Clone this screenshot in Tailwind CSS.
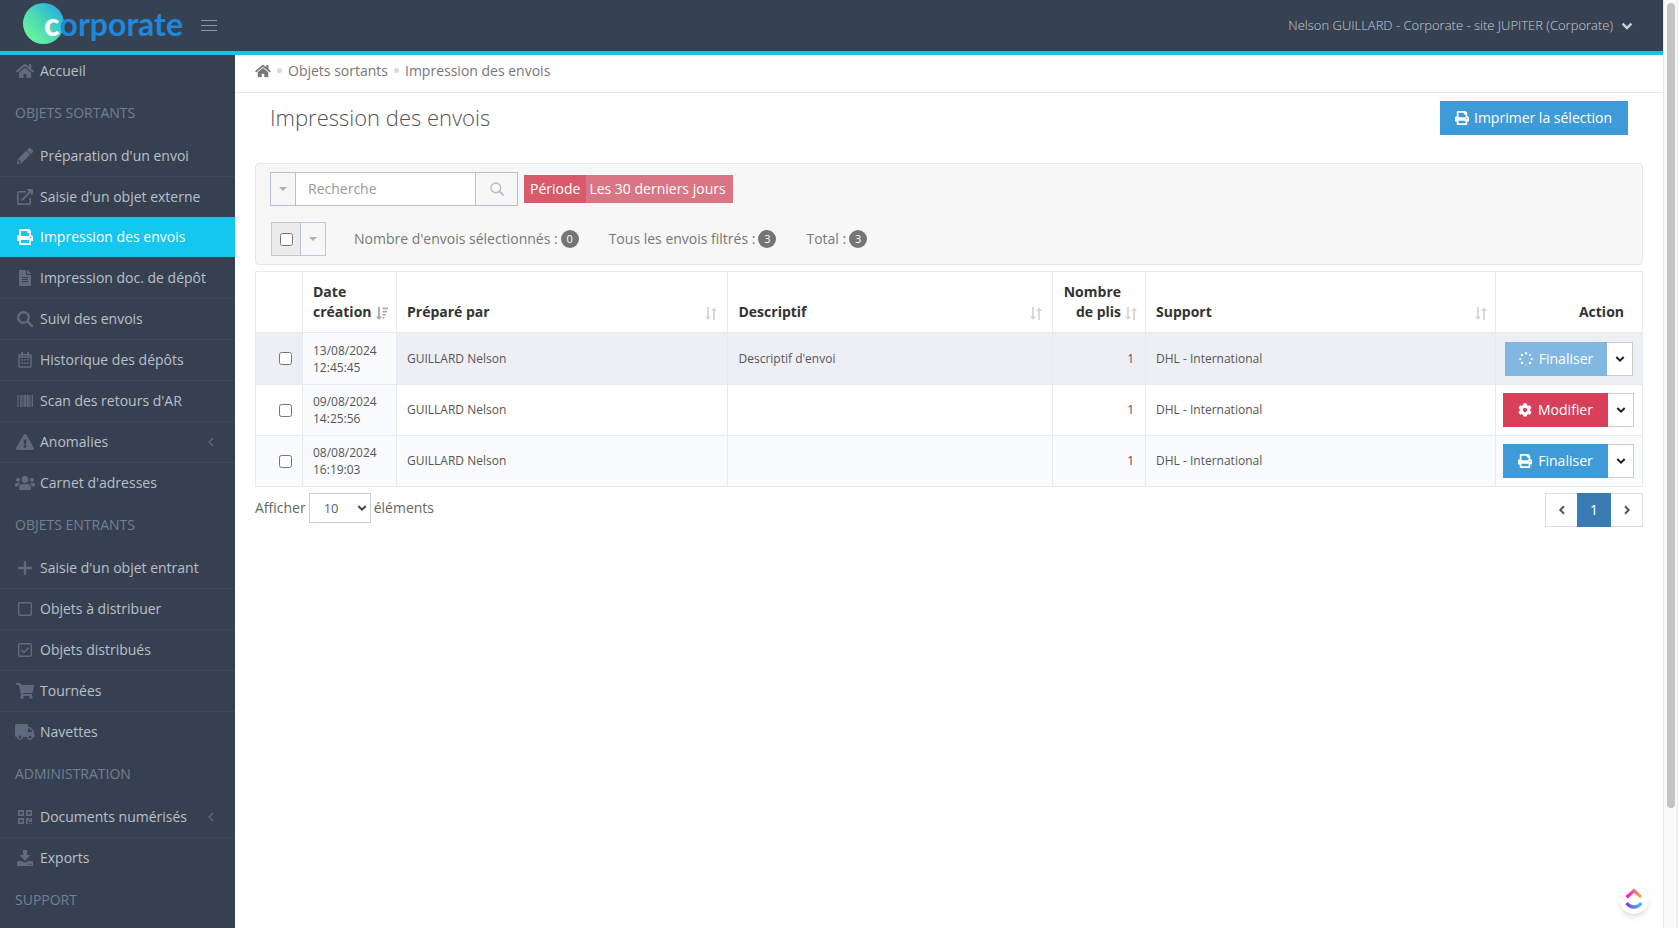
<!DOCTYPE html>
<html lang="fr">
<head>
<meta charset="utf-8">
<title>Impression des envois</title>
<script src="https://cdn.jsdelivr.net/npm/@tailwindcss/browser@4"></script>
</head>
<body class="flex h-screen overflow-hidden bg-white font-['Open_Sans','Noto_Sans',sans-serif] text-sm text-[#666]">

<svg class="hidden" aria-hidden="true">
  <symbol id="home" viewBox="0 0 576 512"><path d="M280.37 148.26L96 300.11V464a16 16 0 0 0 16 16l112.06-.29a16 16 0 0 0 15.92-16V368a16 16 0 0 1 16-16h64a16 16 0 0 1 16 16v95.64a16 16 0 0 0 16 16.05L464 480a16 16 0 0 0 16-16V300L295.67 148.26a12.19 12.19 0 0 0-15.3 0zM571.6 251.47L488 182.56V44.05a12 12 0 0 0-12-12h-56a12 12 0 0 0-12 12v72.61L318.47 43a48 48 0 0 0-61 0L4.34 251.47a12 12 0 0 0-1.6 16.9l25.5 31A12 12 0 0 0 45.15 301l235.22-193.74a12.19 12.19 0 0 1 15.3 0L530.9 301a12 12 0 0 0 16.9-1.6l25.5-31a12 12 0 0 0-1.7-16.93z"/></symbol>
  <symbol id="pencil" viewBox="0 0 512 512"><path d="M497.9 142.1l-46.1 46.1c-4.7 4.7-12.3 4.7-17 0l-111-111c-4.7-4.7-4.7-12.3 0-17l46.1-46.1c18.7-18.7 49.1-18.7 67.9 0l60.1 60.1c18.8 18.7 18.8 49.1 0 67.9zM284.2 99.8L21.6 362.4.4 483.9c-2.9 16.4 11.4 30.6 27.8 27.8l121.5-21.3 262.6-262.6c4.7-4.7 4.7-12.3 0-17l-111-111c-4.8-4.7-12.4-4.7-17.1 0zM88 424h48v36.3l-64.5 11.3-31.1-31.1L51.7 376H88v48z"/></symbol>
  <symbol id="external" viewBox="0 0 512 512"><path d="M288 88H56a28 28 0 0 0-28 28v340a28 28 0 0 0 28 28h340a28 28 0 0 0 28-28V288" fill="none" stroke="currentColor" stroke-width="52"/><path d="M165 347L440 72" fill="none" stroke="currentColor" stroke-width="60" stroke-linecap="round"/><path d="M488 0H352c-21 0-32 26-17 41l136 136c15 15 41 4 41-17V24c0-13-11-24-24-24z"/></symbol>
  <symbol id="print" viewBox="0 0 512 512"><path d="M448 192V77.25c0-8.49-3.37-16.62-9.37-22.63L393.37 9.37c-6-6-14.14-9.37-22.63-9.37H96C78.33 0 64 14.33 64 32v160c-35.35 0-64 28.65-64 64v112c0 8.84 7.16 16 16 16h48v96c0 17.67 14.33 32 32 32h320c17.67 0 32-14.33 32-32v-96h48c8.84 0 16-7.16 16-16V256c0-35.35-28.65-64-64-64zm-64 256H128v-96h256v96zm0-224H128V64h192v48c0 8.84 7.16 16 16 16h48v96zm48 72c-13.25 0-24-10.75-24-24 0-13.26 10.75-24 24-24s24 10.74 24 24c0 13.25-10.75 24-24 24z"/></symbol>
  <symbol id="file" viewBox="0 0 384 512"><path d="M224 136V0H24C10.7 0 0 10.7 0 24v464c0 13.3 10.7 24 24 24h336c13.3 0 24-10.7 24-24V160H248c-13.2 0-24-10.8-24-24zm64 236c0 6.6-5.4 12-12 12H108c-6.6 0-12-5.4-12-12v-8c0-6.6 5.4-12 12-12h168c6.6 0 12 5.4 12 12v8zm0-64c0 6.6-5.4 12-12 12H108c-6.6 0-12-5.4-12-12v-8c0-6.6 5.4-12 12-12h168c6.6 0 12 5.4 12 12v8zm0-72v8c0 6.6-5.4 12-12 12H108c-6.6 0-12-5.4-12-12v-8c0-6.6 5.4-12 12-12h168c6.6 0 12 5.4 12 12zm96-114.1v6.1H256V0h6.1c6.4 0 12.5 2.5 17 7l97.9 98c4.5 4.5 7 10.6 7 16.9z"/></symbol>
  <symbol id="search" viewBox="0 0 16 16"><circle cx="6.5" cy="6.5" r="5.3" fill="none" stroke="currentColor" stroke-width="2.4"/><path d="M10.8 10.8L14.8 14.8" stroke="currentColor" stroke-width="2.6" stroke-linecap="round"/></symbol>
  <symbol id="search-thin" viewBox="0 0 16 16"><circle cx="6.7" cy="6.7" r="5.6" fill="none" stroke="currentColor" stroke-width="1.6"/><path d="M10.8 10.8L15 15" stroke="currentColor" stroke-width="2" stroke-linecap="round"/></symbol>
  <symbol id="calendar" viewBox="0 0 14 16"><path d="M1 4.5V14.2a.8.8 0 0 0 .8.8H12.2a.8.8 0 0 0 .8-.8V3.5a.8.8 0 0 0-.8-.8H1.8a.8.8 0 0 0-.8.8zM1 5H13" fill="none" stroke="currentColor" stroke-width="1.5"/><path d="M3 0h2v3.5H3zM9 0h2v3.5H9zM3.5 7h1.6v1.6H3.5zM6.2 7h1.6v1.6H6.2zM9 7h1.6v1.6H9zM3.5 10.3h1.6v1.6H3.5zM6.2 10.3h1.6v1.6H6.2zM9 10.3h1.6v1.6H9z"/></symbol>
  <symbol id="barcode" viewBox="0 0 16 12"><path d="M0 0h.6v12H0zM1.2 0h.6v12h-.6zM3.2 0h1.5v12H3.2zM5.5 0h1v12h-1zM7.2 0h2.2v12H7.2zM10 0h1.8v12H10zM12.4 0h.7v12h-.7zM13.6 0h.7v12h-.7zM15 0h1v12h-1z"/></symbol>
  <symbol id="warning" viewBox="0 0 576 512"><path d="M569.517 440.013C587.975 472.007 564.806 512 527.94 512H48.054c-36.937 0-59.999-40.055-41.577-71.987L246.423 23.985c18.467-32.009 64.72-31.951 83.154 0l239.94 416.028zM288 354c-25.405 0-46 20.595-46 46s20.595 46 46 46 46-20.595 46-46-20.595-46-46-46zm-43.673-165.346l7.418 136c.347 6.364 5.609 11.346 11.982 11.346h48.546c6.373 0 11.635-4.982 11.982-11.346l7.418-136c.375-6.874-5.098-12.654-11.982-12.654h-63.383c-6.884 0-12.356 5.78-11.981 12.654z"/></symbol>
  <symbol id="users" viewBox="0 0 640 512"><path d="M320 32c-62 0-112 50-112 112s50 112 112 112 112-50 112-112S382 32 320 32zM176 480h288c26 0 48-21 48-48v-29c0-64-52-115-115-115-49 21-105 21-154 0-63 0-115 51-115 115v29c0 27 22 48 48 48z"/><circle cx="96" cy="150" r="64"/><circle cx="544" cy="150" r="64"/><path d="M0 352v-38c0-35 29-64 64-64h56c20 0 32 6 44 18-32 22-56 56-66 96H16c-9 0-16-5-16-12zM640 352v-38c0-35-29-64-64-64h-56c-20 0-32 6-44 18 32 22 56 56 66 96h82c9 0 16-5 16-12z"/></symbol>
  <symbol id="plus" viewBox="0 0 14 14"><path d="M7 1.2V12.800M1.200 7H12.800" stroke="currentColor" stroke-width="2.400" stroke-linecap="round"/></symbol>
  <symbol id="square" viewBox="0 0 14 14"><rect x=".7" y=".7" width="12.6" height="12.6" rx="1" fill="none" stroke="currentColor" stroke-width="1.4"/></symbol>
  <symbol id="square-check" viewBox="0 0 14 14"><rect x=".7" y=".7" width="12.6" height="12.6" rx="1" fill="none" stroke="currentColor" stroke-width="1.4"/><path d="M3.5 7.2L6 9.5L10.7 4.7" fill="none" stroke="currentColor" stroke-width="1.6"/></symbol>
  <symbol id="cart" viewBox="0 0 576 512"><path d="M528.12 301.319l47.273-208C578.806 78.301 567.391 64 551.99 64H159.208l-9.166-44.81C147.758 8.021 137.93 0 126.529 0H24C10.745 0 0 10.745 0 24v16c0 13.255 10.745 24 24 24h69.883l70.248 343.435C147.325 417.1 136 435.222 136 456c0 30.928 25.072 56 56 56s56-25.072 56-56c0-15.674-6.447-29.835-16.824-40h209.647C430.447 426.165 424 440.326 424 456c0 30.928 25.072 56 56 56s56-25.072 56-56c0-22.172-12.888-41.332-31.579-50.405l5.517-24.276c3.413-15.018-8.002-29.319-23.403-29.319H218.117l-6.545-32h293.145c11.206 0 20.92-7.754 23.403-18.681z"/></symbol>
  <symbol id="truck" viewBox="0 0 640 512"><path d="M624 352h-16V243.9c0-12.7-5.1-24.9-14.1-33.9L494 110.1c-9-9-21.2-14.1-33.9-14.1H416V48c0-26.5-21.5-48-48-48H48C21.5 0 0 21.5 0 48v320c0 26.5 21.5 48 48 48h16c0 53 43 96 96 96s96-43 96-96h128c0 53 43 96 96 96s96-43 96-96h48c8.8 0 16-7.2 16-16v-32c0-8.8-7.2-16-16-16zM160 464c-26.5 0-48-21.5-48-48s21.5-48 48-48 48 21.5 48 48-21.5 48-48 48zm320 0c-26.5 0-48-21.5-48-48s21.5-48 48-48 48 21.5 48 48-21.5 48-48 48zm80-208H416V144h44.1l99.9 99.9V256z"/></symbol>
  <symbol id="qrcode" viewBox="0 0 14 14"><path fill-rule="evenodd" d="M0 0h6v6H0zM1.7 1.7v2.6h2.6V1.7zM8 0h6v6H8zM9.7 1.7v2.6h2.6V1.7zM0 8h6v6H0zM1.7 9.7v2.6h2.6V9.7zM8 8h3v1.5h1.2V8H14v4h-3v-1.5H9.7V14H8zM11 13h1v1h-1zM13 13h1v1h-1z"/></symbol>
  <symbol id="download" viewBox="0 0 512 512"><path d="M216 0h80c13.3 0 24 10.7 24 24v136h70c17.8 0 26.700 21.500 14.100 34.100L269.700 330c-7.500 7.500-19.800 7.500-27.300 0L108 194.100C95 181.500 104 160 122 160H192V24c0-13.300 10.700-24 24-24z"/><path fill-rule="evenodd" d="M24 352h130l54 36c28 18 68 18 96 0l54-36h130c13.300 0 24 10.700 24 24v112c0 13.300-10.700 24-24 24H24c-13.300 0-24-10.700-24-24V376c0-13.300 10.700-24 24-24zM352 440v40h36v-40zM424 440v40h36v-40z"/></symbol>
  <symbol id="cog" viewBox="0 0 512 512"><path d="M487.4 315.7l-42.6-24.6c4.3-23.2 4.3-47 0-70.2l42.6-24.6c4.9-2.8 7.1-8.6 5.5-14-11.1-35.6-30-67.8-54.7-94.6-3.8-4.1-10-5.1-14.8-2.3L380.8 110c-17.9-15.4-38.5-27.3-60.8-35.1V25.8c0-5.6-3.9-10.5-9.4-11.7-36.7-8.2-74.3-7.8-109.2 0-5.5 1.2-9.4 6.1-9.4 11.7V75c-22.2 7.9-42.8 19.8-60.8 35.1L88.7 85.5c-4.9-2.8-11-1.9-14.8 2.3-24.7 26.7-43.6 58.9-54.7 94.6-1.7 5.4.6 11.2 5.5 14L67.3 221c-4.3 23.2-4.3 47 0 70.2l-42.6 24.6c-4.9 2.8-7.1 8.6-5.5 14 11.1 35.6 30 67.8 54.7 94.6 3.8 4.1 10 5.1 14.8 2.3l42.6-24.6c17.9 15.4 38.5 27.3 60.8 35.1v49.2c0 5.6 3.9 10.5 9.4 11.7 36.7 8.2 74.3 7.8 109.2 0 5.5-1.2 9.4-6.1 9.4-11.7v-49.2c22.2-7.9 42.8-19.8 60.8-35.1l42.6 24.6c4.9 2.8 11 1.9 14.8-2.3 24.7-26.7 43.6-58.9 54.7-94.6 1.5-5.5-.7-11.3-5.6-14.1zM256 336c-44.1 0-80-35.9-80-80s35.9-80 80-80 80 35.9 80 80-35.9 80-80 80z"/></symbol>
  <symbol id="spinner" viewBox="0 0 14 14"><circle cx="7" cy="1.3" r="1.2"/><circle cx="11" cy="3" r=".9"/><circle cx="12.7" cy="7" r="1.1"/><circle cx="11" cy="11" r="1.2"/><circle cx="3" cy="11" r="1.2"/><circle cx="1.3" cy="7" r="1.1"/><circle cx="3" cy="3" r="1.2"/><circle cx="7" cy="12.8" r=".6"/></symbol>
  <symbol id="chev-down" viewBox="0 0 10 10"><path d="M1.3 3L5 6.7L8.7 3" fill="none" stroke="currentColor" stroke-width="2"/></symbol>
  <symbol id="chev-left" viewBox="0 0 10 10"><path d="M7 1.3L3.3 5L7 8.7" fill="none" stroke="currentColor" stroke-width="2"/></symbol>
  <symbol id="chev-right" viewBox="0 0 10 10"><path d="M3 1.3L6.7 5L3 8.7" fill="none" stroke="currentColor" stroke-width="2"/></symbol>
  <symbol id="angle-left" viewBox="0 0 6 10"><path d="M5 1L1 5L5 9" fill="none" stroke="currentColor" stroke-width="1.3"/></symbol>
  <symbol id="caret" viewBox="0 0 8 4"><path d="M0 0H8L4 4z"/></symbol>
  <symbol id="sort" viewBox="0 0 12 14"><path d="M3 0V11M9 3V13" stroke="currentColor" stroke-width="1.8"/><path d="M0 9.5H6L3 13zM6 4H12L9 .5z"/></symbol>
  <symbol id="sort-desc" viewBox="0 0 12 14"><path d="M3 0V11" stroke="currentColor" stroke-width="1.8"/><path d="M0 9.5H6L3 13zM6.5 .5H12V2.2H6.5zM6.5 3.7H11V5.4H6.5zM6.5 6.9H10V8.6H6.5zM6.5 10.1H8.5V11.8H6.5z"/></symbol>
</svg>

<div class="flex min-w-0 flex-1 flex-col">
  <header class="flex h-[55px] shrink-0 items-center justify-between border-b-4 border-[#1bc3e3] bg-[#364252] pr-[30px] pl-[23px]">
    <div class="flex items-center gap-[18px]">
      <a href="#" class="relative flex h-[45px] items-center pb-1" aria-label="corporate">
        <span class="absolute top-0 left-0 size-[41px] rounded-full bg-linear-to-tr from-[#74ff8c] via-[#4cd8b4] to-[#1e9fe8]"></span>
        <span class="relative pl-[21px] font-[Lato,sans-serif] text-[32px] leading-none font-bold text-[#1e88dc]"><span class="font-black text-white">c</span>orporate</span>
      </a>
      <button class="flex w-4 flex-col gap-1" aria-label="Menu"><span class="h-px bg-[#8d97a5]"></span><span class="h-px bg-[#8d97a5]"></span><span class="h-px bg-[#8d97a5]"></span></button>
    </div>
    <button class="flex items-center gap-2 text-[13px] font-light text-[#c6cfda]">Nelson GUILLARD - Corporate - site JUPITER (Corporate)<svg class="size-3 fill-current"><use href="#chev-down"/></svg></button>
  </header>

  <div class="flex min-h-0 flex-1">
    <nav class="w-[235px] shrink-0 overflow-hidden bg-[#374050] text-[#b8c0cc]">
      <a href="#" class="flex h-9 items-center gap-1 pr-5 pb-1 pl-[15px]"><svg class="h-4 w-5 fill-current text-[#606a7e]"><use href="#home"/></svg><span class="flex-1 pl-px">Accueil</span></a>
      <h3 class="flex h-11 items-center px-[15px] text-[#708096]">OBJETS SORTANTS</h3>
      <a href="#" class="flex h-[41px] items-center gap-1 pr-5 pl-[15px]"><svg class="h-4 w-5 fill-current text-[#606a7e]"><use href="#pencil"/></svg><span class="flex-1 pl-px">Préparation d'un envoi</span></a>
      <a href="#" class="flex h-[41px] items-center gap-1 border-t border-[#3f4959] pr-5 pl-[15px]"><svg class="h-4 w-5 fill-current text-[#606a7e]"><use href="#external"/></svg><span class="flex-1 pl-px">Saisie d'un objet externe</span></a>
      <a href="#" aria-current="page" class="flex h-10 items-center gap-1 bg-[#14c7ee] pr-5 pl-[15px] text-white"><svg class="h-4 w-5 fill-current"><use href="#print"/></svg><span class="flex-1 pl-px">Impression des envois</span></a>
      <a href="#" class="flex h-[41px] items-center gap-1 pr-5 pl-[15px]"><svg class="h-4 w-5 fill-current text-[#606a7e]"><use href="#file"/></svg><span class="flex-1 pl-px">Impression doc. de dépôt</span></a>
      <a href="#" class="flex h-[41px] items-center gap-1 border-t border-[#3f4959] pr-5 pl-[15px]"><svg class="h-4 w-5 fill-current text-[#606a7e]"><use href="#search"/></svg><span class="flex-1 pl-px">Suivi des envois</span></a>
      <a href="#" class="flex h-[41px] items-center gap-1 border-t border-[#3f4959] pr-5 pl-[15px]"><svg class="h-4 w-5 fill-current text-[#606a7e]"><use href="#calendar"/></svg><span class="flex-1 pl-px">Historique des dépôts</span></a>
      <a href="#" class="flex h-[41px] items-center gap-1 border-t border-[#3f4959] pr-5 pl-[15px]"><svg class="h-3 w-5 fill-current text-[#606a7e]"><use href="#barcode"/></svg><span class="flex-1 pl-px">Scan des retours d'AR</span></a>
      <a href="#" class="flex h-[41px] items-center gap-1 border-t border-[#3f4959] pr-5 pl-[15px]"><svg class="h-4 w-5 fill-current text-[#606a7e]"><use href="#warning"/></svg><span class="flex-1 pl-px">Anomalies</span><svg class="h-2.5 w-2 text-[#606a7e]"><use href="#angle-left"/></svg></a>
      <a href="#" class="flex h-[41px] items-center gap-1 border-t border-[#3f4959] pr-5 pl-[15px]"><svg class="h-4 w-5 fill-current text-[#606a7e]"><use href="#users"/></svg><span class="flex-1 pl-px">Carnet d'adresses</span></a>
      <h3 class="flex h-11 items-center px-[15px] text-[#708096]">OBJETS ENTRANTS</h3>
      <a href="#" class="flex h-[41px] items-center gap-1 pr-5 pl-[15px]"><svg class="h-3.5 w-5 fill-current text-[#606a7e]"><use href="#plus"/></svg><span class="flex-1 pl-px">Saisie d'un objet entrant</span></a>
      <a href="#" class="flex h-[41px] items-center gap-1 border-t border-[#3f4959] pr-5 pl-[15px]"><svg class="h-3.5 w-5 fill-current text-[#606a7e]"><use href="#square"/></svg><span class="flex-1 pl-px">Objets à distribuer</span></a>
      <a href="#" class="flex h-[41px] items-center gap-1 border-t border-[#3f4959] pr-5 pl-[15px]"><svg class="h-3.5 w-5 fill-current text-[#606a7e]"><use href="#square-check"/></svg><span class="flex-1 pl-px">Objets distribués</span></a>
      <a href="#" class="flex h-[41px] items-center gap-1 border-t border-[#3f4959] pr-5 pl-[15px]"><svg class="h-4 w-5 fill-current text-[#606a7e]"><use href="#cart"/></svg><span class="flex-1 pl-px">Tournées</span></a>
      <a href="#" class="flex h-[41px] items-center gap-1 border-t border-[#3f4959] pr-5 pl-[15px]"><svg class="h-4 w-5 fill-current text-[#606a7e]"><use href="#truck"/></svg><span class="flex-1 pl-px">Navettes</span></a>
      <h3 class="flex h-11 items-center px-[15px] text-[#708096]">ADMINISTRATION</h3>
      <a href="#" class="flex h-[41px] items-center gap-1 pr-5 pl-[15px]"><svg class="h-3.5 w-5 fill-current text-[#606a7e]"><use href="#qrcode"/></svg><span class="flex-1 pl-px">Documents numérisés</span><svg class="h-2.5 w-2 text-[#606a7e]"><use href="#angle-left"/></svg></a>
      <a href="#" class="flex h-[41px] items-center gap-1 border-t border-[#3f4959] pr-5 pl-[15px]"><svg class="h-4 w-5 fill-current text-[#606a7e]"><use href="#download"/></svg><span class="flex-1 pl-px">Exports</span></a>
      <h3 class="flex h-11 items-center px-[15px] text-[#708096]">SUPPORT</h3>
    </nav>

    <main class="min-w-0 flex-1">
      <div class="flex h-[38px] items-center gap-[6px] border-b border-[#e7eaf0] px-5 pb-[6px] text-[#777]">
        <a href="#" aria-label="Accueil"><svg class="h-3.5 w-4 fill-current"><use href="#home"/></svg></a>
        <span class="size-[5px] rounded-full bg-[#d9d9d9]"></span>
        <a href="#">Objets sortants</a>
        <span class="size-[5px] rounded-full bg-[#d9d9d9]"></span>
        <span>Impression des envois</span>
      </div>

      <div class="px-5 pt-2">
        <div class="flex items-start justify-between pr-[15px] pl-[15px]">
          <h1 class="text-[22px] leading-8 font-light text-[#555]">Impression des envois</h1>
          <button class="flex h-[34px] items-center gap-[5px] bg-[#3f9bd8] pr-4 pl-[15px] text-white"><svg class="size-3.5 fill-current"><use href="#print"/></svg>Imprimer la sélection</button>
        </div>

        <section class="mt-7 flex flex-col gap-4 rounded-sm border border-[#e6e6e6] bg-[#f7f7f7] px-[14px] pt-2 pb-2">
          <div class="flex items-center gap-[6px]">
            <div class="flex h-[34px] border border-[#b8c0d0]">
              <button class="flex w-[25px] items-center justify-center border-r border-[#b8c0d0] text-[#a6b1c3]" aria-label="Options de recherche"><svg class="h-1 w-2 fill-current"><use href="#caret"/></svg></button>
              <input type="text" placeholder="Recherche" aria-label="Recherche" class="w-[179px] bg-white px-3 placeholder:text-[#999]">
              <button class="flex w-[42px] items-center justify-center border-l border-[#b8c0d0] text-[#b3bfcf]" aria-label="Rechercher"><svg class="size-3.5"><use href="#search-thin"/></svg></button>
            </div>
            <button class="flex h-7 items-center bg-[#d97584] text-white"><span class="flex h-full items-center bg-[#d85a6b] px-[6px]">Période</span><span class="pr-[7px] pl-[3px]">Les 30 derniers jours</span></button>
          </div>
          <div class="flex items-center">
            <div class="ml-px flex h-[34px] border border-[#c3c8d2]">
              <label class="flex w-7 items-center justify-center bg-[#ececec]"><input type="checkbox" aria-label="Tout sélectionner" class="size-[13px]"></label>
              <button class="flex w-[25px] items-center justify-center border-l border-[#b8c0d0] text-[#a6b1c3]" aria-label="Options de sélection"><svg class="h-1 w-2 fill-current"><use href="#caret"/></svg></button>
            </div>
            <div class="ml-7 flex items-center gap-[30px] text-[#777]">
              <span class="flex items-center gap-[3px]">Nombre d'envois sélectionnés : <span class="flex size-[18px] items-center justify-center rounded-full bg-[#757575] text-[11px] text-white">0</span></span>
              <span class="flex items-center gap-[3px]">Tous les envois filtrés : <span class="flex size-[18px] items-center justify-center rounded-full bg-[#757575] text-[11px] text-white">3</span></span>
              <span class="flex items-center gap-[3px]">Total : <span class="flex size-[18px] items-center justify-center rounded-full bg-[#757575] text-[11px] text-white">3</span></span>
            </div>
          </div>
        </section>

        <table class="mt-[6px] w-full table-fixed border-collapse border border-[#e7eaf0] text-xs text-[#555]">
          <colgroup><col class="w-[47px]"><col class="w-[94px]"><col class="w-[23.9%]"><col class="w-[23.4%]"><col class="w-[93px]"><col><col class="w-[147px]"></colgroup>
          <thead>
            <tr class="h-[61px] text-left align-bottom text-sm text-[#333]">
              <th class="border border-[#e7eaf0]" aria-label="Sélection"></th>
              <th class="border border-[#e7eaf0] pb-[10px] pl-[10px]"><div class="flex items-end gap-1"><span class="w-min">Date création</span><svg class="mb-px h-3.5 w-3 shrink-0 fill-current text-[#a9a9a9]"><use href="#sort-desc"/></svg></div></th>
              <th class="border border-[#e7eaf0] pr-[10px] pb-[10px] pl-[10px]"><div class="flex items-end justify-between">Préparé par<svg class="mb-px h-3.5 w-3 fill-current text-[#d5d5d5]"><use href="#sort"/></svg></div></th>
              <th class="border border-[#e7eaf0] pr-[10px] pb-[10px] pl-[10px]"><div class="flex items-end justify-between">Descriptif<svg class="mb-px h-3.5 w-3 fill-current text-[#d5d5d5]"><use href="#sort"/></svg></div></th>
              <th class="border border-[#e7eaf0] pr-2 pb-[10px] pl-[10px] text-right"><div class="flex items-end justify-end gap-1"><span>Nombre de plis</span><svg class="mb-px h-3.5 w-3 shrink-0 fill-current text-[#d5d5d5]"><use href="#sort"/></svg></div></th>
              <th class="border border-[#e7eaf0] pr-2 pb-[10px] pl-[10px]"><div class="flex items-end justify-between">Support<svg class="mb-px h-3.5 w-3 fill-current text-[#d5d5d5]"><use href="#sort"/></svg></div></th>
              <th class="border border-[#e7eaf0] pr-[18px] pb-[10px] text-right">Action</th>
            </tr>
          </thead>
          <tbody>
            <tr class="h-[52px] bg-[#edeff5]">
              <td class="border border-[#e7eaf0] pr-[10px]"><input type="checkbox" aria-label="Sélectionner l'envoi du 13/08/2024" class="ml-auto block size-[13px]"></td>
              <td class="border border-[#e7eaf0] bg-[#fafbfd] px-[10px] leading-[17px]">13/08/2024 12:45:45</td>
              <td class="border border-[#e7eaf0] px-[10px]">GUILLARD Nelson</td>
              <td class="border border-[#e7eaf0] px-[10px]">Descriptif d'envoi</td>
              <td class="border border-[#e7eaf0] px-[11px] text-right">1</td>
              <td class="border border-[#e7eaf0] px-[10px]">DHL - International</td>
              <td class="border border-[#e7eaf0]"><div class="flex h-[34px] justify-end pr-[9px] text-sm"><button class="flex w-[102px] items-center justify-center gap-[6px] bg-[#82b7e1] text-white"><svg class="size-3.5 fill-current"><use href="#spinner"/></svg>Finaliser</button><button class="flex w-[26px] items-center justify-center border border-l-0 border-[#ccc] bg-white text-[#222]" aria-label="Autres actions"><svg class="size-2.5"><use href="#chev-down"/></svg></button></div></td>
            </tr>
            <tr class="h-[51px] bg-white">
              <td class="border border-[#e7eaf0] pr-[10px]"><input type="checkbox" aria-label="Sélectionner l'envoi du 09/08/2024" class="ml-auto block size-[13px]"></td>
              <td class="border border-[#e7eaf0] bg-[#fafbfd] px-[10px] leading-[17px]">09/08/2024 14:25:56</td>
              <td class="border border-[#e7eaf0] px-[10px]">GUILLARD Nelson</td>
              <td class="border border-[#e7eaf0] px-[10px]"></td>
              <td class="border border-[#e7eaf0] px-[11px] text-right">1</td>
              <td class="border border-[#e7eaf0] px-[10px]">DHL - International</td>
              <td class="border border-[#e7eaf0]"><div class="flex h-[34px] justify-end pr-2 text-sm"><button class="flex w-[105px] items-center justify-center gap-[6px] bg-[#d83f59] text-white"><svg class="size-3.5 fill-current"><use href="#cog"/></svg>Modifier</button><button class="flex w-[26px] items-center justify-center border border-l-0 border-[#ccc] bg-white text-[#222]" aria-label="Autres actions"><svg class="size-2.5"><use href="#chev-down"/></svg></button></div></td>
            </tr>
            <tr class="h-[51px] bg-[#fafbfd]">
              <td class="border border-[#e7eaf0] pr-[10px]"><input type="checkbox" aria-label="Sélectionner l'envoi du 08/08/2024" class="ml-auto block size-[13px]"></td>
              <td class="border border-[#e7eaf0] px-[10px] leading-[17px]">08/08/2024 16:19:03</td>
              <td class="border border-[#e7eaf0] px-[10px]">GUILLARD Nelson</td>
              <td class="border border-[#e7eaf0] px-[10px]"></td>
              <td class="border border-[#e7eaf0] px-[11px] text-right">1</td>
              <td class="border border-[#e7eaf0] px-[10px]">DHL - International</td>
              <td class="border border-[#e7eaf0]"><div class="flex h-[34px] justify-end pr-2 text-sm"><button class="flex w-[105px] items-center justify-center gap-[6px] bg-[#3f9bd8] text-white"><svg class="size-3.5 fill-current"><use href="#print"/></svg>Finaliser</button><button class="flex w-[26px] items-center justify-center border border-l-0 border-[#ccc] bg-white text-[#222]" aria-label="Autres actions"><svg class="size-2.5"><use href="#chev-down"/></svg></button></div></td>
            </tr>
          </tbody>
        </table>

        <div class="mt-[6px] flex items-start justify-between">
          <label class="flex items-baseline gap-[3px]">Afficher
            <span class="relative flex items-center">
              <select class="h-[30px] w-[62px] appearance-none border border-[#c9cfdb] bg-white pl-[14px] text-[13px] text-[#666]"><option>10</option><option>25</option><option>50</option></select>
              <svg class="pointer-events-none absolute right-1 size-2.5 text-[#444]"><use href="#chev-down"/></svg>
            </span>éléments</label>
          <div class="flex h-[34px] text-[#555]">
            <button class="flex w-8 items-center justify-center border border-r-0 border-[#ddd]" aria-label="Page précédente"><svg class="size-2.5"><use href="#chev-left"/></svg></button>
            <button class="w-[34px] bg-[#397cb4] text-white" aria-current="page">1</button>
            <button class="flex w-8 items-center justify-center border border-l-0 border-[#ddd]" aria-label="Page suivante"><svg class="size-2.5"><use href="#chev-right"/></svg></button>
          </div>
        </div>
      </div>
    </main>
  </div>
</div>

<div class="flex w-[15px] shrink-0 justify-center border-x border-[#e8e8e8] bg-[#fafafa] pt-[3px]"><div class="h-[87%] w-2 rounded-full bg-[#c4c4c4]"></div></div>

<button class="absolute right-[29px] bottom-[14px] flex size-[30px] items-center justify-center rounded-full bg-white shadow-md" aria-label="ClickUp">
  <svg class="size-[22px]" viewBox="0 0 22 22" fill="none" stroke-width="3.4">
    <defs><linearGradient id="gu"><stop stop-color="#f012d0"/><stop offset="1" stop-color="#f9b83f"/></linearGradient><linearGradient id="gd"><stop stop-color="#7a3bf0"/><stop offset="1" stop-color="#4fbdf3"/></linearGradient></defs>
    <path d="M3.7 9.3L11 2.8L18.3 9.3" stroke="url(#gu)"/><path d="M3.600 15C7.500 20.300 14.500 20.300 18.400 15" stroke="url(#gd)"/>
  </svg>
</button>
</body>
</html>
